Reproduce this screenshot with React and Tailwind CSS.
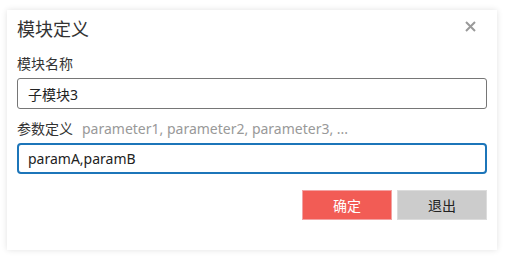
import React, { useState } from "react";

const ModuleDialog = () => {
  const [name, setName] = useState("子模块3");
  const [params, setParams] = useState("paramA,paramB");

  return (
    <div className="w-[490px] h-[240px] bg-white shadow-[0_0_6px_rgba(0,0,0,0.12)] px-[10px] pt-[4px]">
      {/* Header */}
      <div className="flex items-start justify-between h-[26px]">
        <p className="mt-[2px] text-[18px] text-[#333] leading-[26px]">{`模块定义`}</p>
        <svg
          className="mt-[7px] mr-[11px] w-[11px] h-[11px] cursor-pointer"
          viewBox="0 0 11 11"
          fill="none"
          stroke="#9a9a9a"
          strokeWidth="2"
        >
          <path d="M1 1L10 10M10 1L1 10" />
        </svg>
      </div>

      {/* Name */}
      <p className="mt-[16px] text-[14px] text-[#333] leading-[16px]">{`模块名称`}</p>
      <input
        type="text"
        value={name}
        onChange={(e) => setName(e.target.value)}
        className="mt-[6px] w-full h-[31px] border border-[#767676] rounded-[3px] px-[10px] text-[14px] text-[#222] outline-none"
      />

      {/* Params */}
      <p className="mt-[12px] text-[14px] text-[#333] leading-[16px]">
        {`参数定义`}
        <span className="ml-[9px] text-[#999]">{`parameter1, parameter2, parameter3, ...`}</span>
      </p>
      <input
        type="text"
        value={params}
        onChange={(e) => setParams(e.target.value)}
        className="mt-[6px] w-full h-[31px] border-2 border-[#1c75b9] rounded-[4px] px-[9px] text-[14px] text-[#222] outline-none"
      />

      {/* Buttons */}
      <div className="mt-[16px] flex justify-end gap-[5px]">
        <button className="w-[90px] h-[30px] bg-[#f25c55] border border-[#f3a3a3] text-white text-[14px]">
          {`确定`}
        </button>
        <button className="w-[90px] h-[30px] bg-[#cccccc] border border-[#dcdcdc] text-[#222] text-[14px]">
          {`退出`}
        </button>
      </div>
    </div>
  );
};

export default function App() {
  return (
    <div
      className="w-[508px] h-[259px] bg-white pt-[10px] pl-[7px]"
      style={{ fontFamily: '"Noto Sans", "Noto Sans CJK SC", sans-serif' }}
    >
      <ModuleDialog />
    </div>
  );
}
